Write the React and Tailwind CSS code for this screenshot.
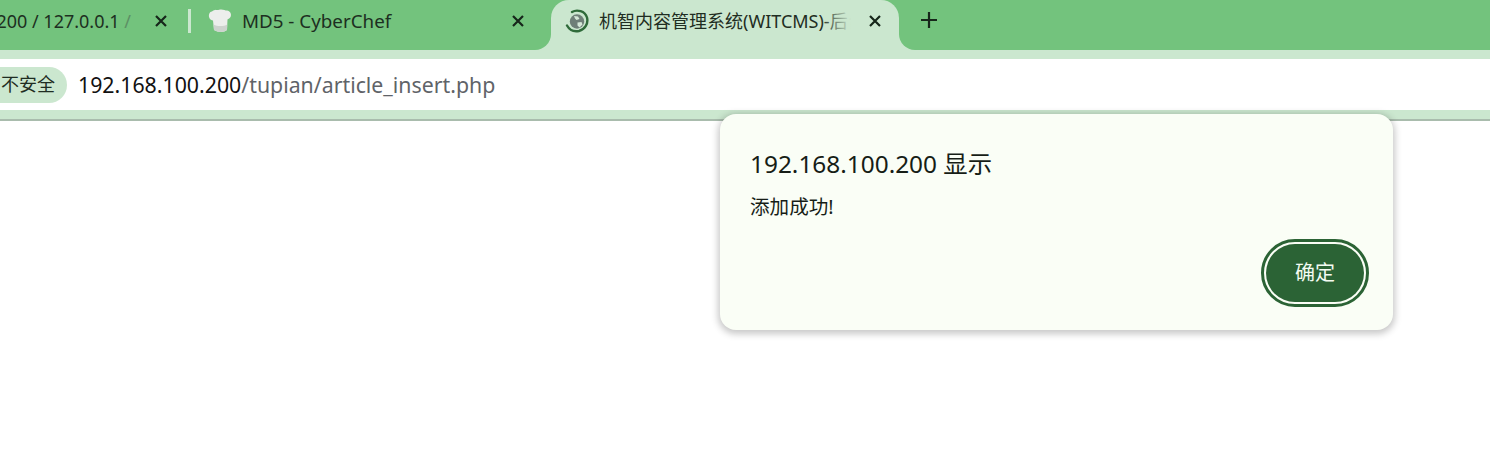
const sans = "font-['Noto_Sans','Noto_Sans_CJK_SC',sans-serif]";

const CloseIcon = () => (
  <svg width="12" height="12" viewBox="0 0 12 12" className="shrink-0">
    <path d="M1 1L11 11M11 1L1 11" stroke="#16261a" strokeWidth="2.2" />
  </svg>
);

const ChefIcon = () => (
  <svg width="24" height="24" viewBox="0 0 24 24" className="shrink-0">
    <path d="M4 2.5C6.5 0 10 1.5 12 .5C15 0 17 1.5 19 1.5C22 2 24 5 22.5 8C21.5 9.5 20 10 19.5 10.5L19 21C16 23.5 10 23.5 6 21L5 11.5C2 11 .5 8.5 1 5.5C1.5 3.5 2.5 2.5 4 2.5Z" fill="#eceeec" />
    <path d="M5.6 15.5C9 17.5 16 17.5 19.2 15.5L19 21C16 23.5 10 23.5 6 21Z" fill="#cdd3ce" />
  </svg>
);

const GlobeIcon = () => (
  <svg width="24" height="24" viewBox="0 0 24 24" className="shrink-0">
    <circle cx="12" cy="12.5" r="7.2" fill="#6f7f78" />
    <path d="M9 7L13 7.5L14.5 10L11.5 11L10 9.5ZM12.5 13.5L16.5 13L17.5 15.5L14.5 18.5L12.5 16.5Z" fill="#d5e8d8" />
    <path d="M7 3C12 0 20 2 22 8.5C23.5 14.5 20 20.5 14 22C9 23 4.5 21 2 16.5" fill="none" stroke="#2f6b3a" strokeWidth="2.4" strokeLinecap="round" />
  </svg>
);

const App = () => {
  return (
    <div className={`relative h-[465px] w-[1490px] overflow-hidden bg-white ${sans}`}>
      {/* Tabs */}
      <div className="flex h-[50px] bg-[#73c37d]">
        <div className="flex w-[167px] shrink-0 items-start justify-end pt-[9px]">
          <span className="pr-[24px] text-[18px] leading-[24px] whitespace-nowrap text-[#1d2f21]">
            200 / 127.0.0.1 <span className="text-[#5d8f65]">/</span>
          </span>
          <div className="mt-[6px]"><CloseIcon /></div>
        </div>
        <div className="mt-[9px] ml-[21px] h-[24px] w-[3px] bg-[#cbe7cf]" />
        <div className="flex w-[360px] shrink-0 items-start pt-[9px] pl-[17px]">
          <ChefIcon />
          <span className="ml-[10px] w-[270px] text-[18.8px] leading-[24px] text-[#1d2f21]">MD5 - CyberChef</span>
          <div className="mt-[6px]"><CloseIcon /></div>
        </div>
        <div className="relative flex h-[50px] w-[348px] shrink-0 items-start rounded-t-[18px] bg-[#cbe7cf] pt-[9px] pl-[14px]">
          <div className="absolute bottom-0 left-[-16px] h-[16px] w-[16px] bg-[#cbe7cf]">
            <div className="h-full w-full rounded-br-[16px] bg-[#73c37d]" />
          </div>
          <div className="absolute right-[-16px] bottom-0 h-[16px] w-[16px] bg-[#cbe7cf]">
            <div className="h-full w-full rounded-bl-[16px] bg-[#73c37d]" />
          </div>
          <GlobeIcon />
          <div className="relative ml-[10px] w-[252px] overflow-hidden text-[18px] leading-[24px] whitespace-nowrap text-[#1f2d22]">
            机智内容管理系统(WITCMS)-后台
            <div className="absolute inset-y-0 right-0 w-[30px] bg-gradient-to-r from-transparent to-[#cbe7cf]" />
          </div>
          <div className="mt-[6px] ml-[18px]"><CloseIcon /></div>
        </div>
        <div className="mt-[12px] ml-[22px]">
          <svg width="16" height="16" viewBox="0 0 16 16">
            <path d="M8 0V16M0 8H16" stroke="#16261a" strokeWidth="2.2" />
          </svg>
        </div>
      </div>

      {/* Toolbar */}
      <div className="h-[9px] bg-[#cbe7cf]" />
      <div className="flex h-[51px] items-center bg-white">
        <div className="flex h-[36px] w-[67px] shrink-0 items-center justify-end rounded-r-full bg-[#cbe7cf] pr-[12px] text-[18px] whitespace-nowrap text-[#1f2d22]">
          不安全
        </div>
        <div className="ml-[11px] text-[21.3px] leading-[24px] whitespace-nowrap text-[#111]">
          192.168.100.200<span className="text-[#5f6368]">/tupian/article_insert.php</span>
        </div>
      </div>
      <div className="h-[9px] bg-[#cbe7cf]" />
      <div className="h-[2px] bg-[#a9bcad]" />

      {/* Alert dialog */}
      <div className="absolute top-[114px] left-[720px] flex h-[216px] w-[673px] flex-col rounded-[16px] bg-[#fafef6] pt-[33px] pr-[24px] pl-[30px] shadow-[0_2px_7px_2px_rgba(0,0,0,0.22)]">
        <div className="text-[24.4px] leading-[34px] text-[#161d16]">192.168.100.200 显示</div>
        <div className="mt-[14px] text-[19.6px] leading-[24px] text-[#161d16]">添加成功!</div>
        <div className="mt-[20px] flex justify-end">
          <button className="flex h-[68px] w-[108px] items-center justify-center rounded-full border-[3px] border-[#2b6335] p-[2px]">
            <span className="flex h-full w-full items-center justify-center rounded-full bg-[#2b6335] text-[20px] text-[#f4fbf2]">确定</span>
          </button>
        </div>
      </div>
    </div>
  );
};

export default App;
